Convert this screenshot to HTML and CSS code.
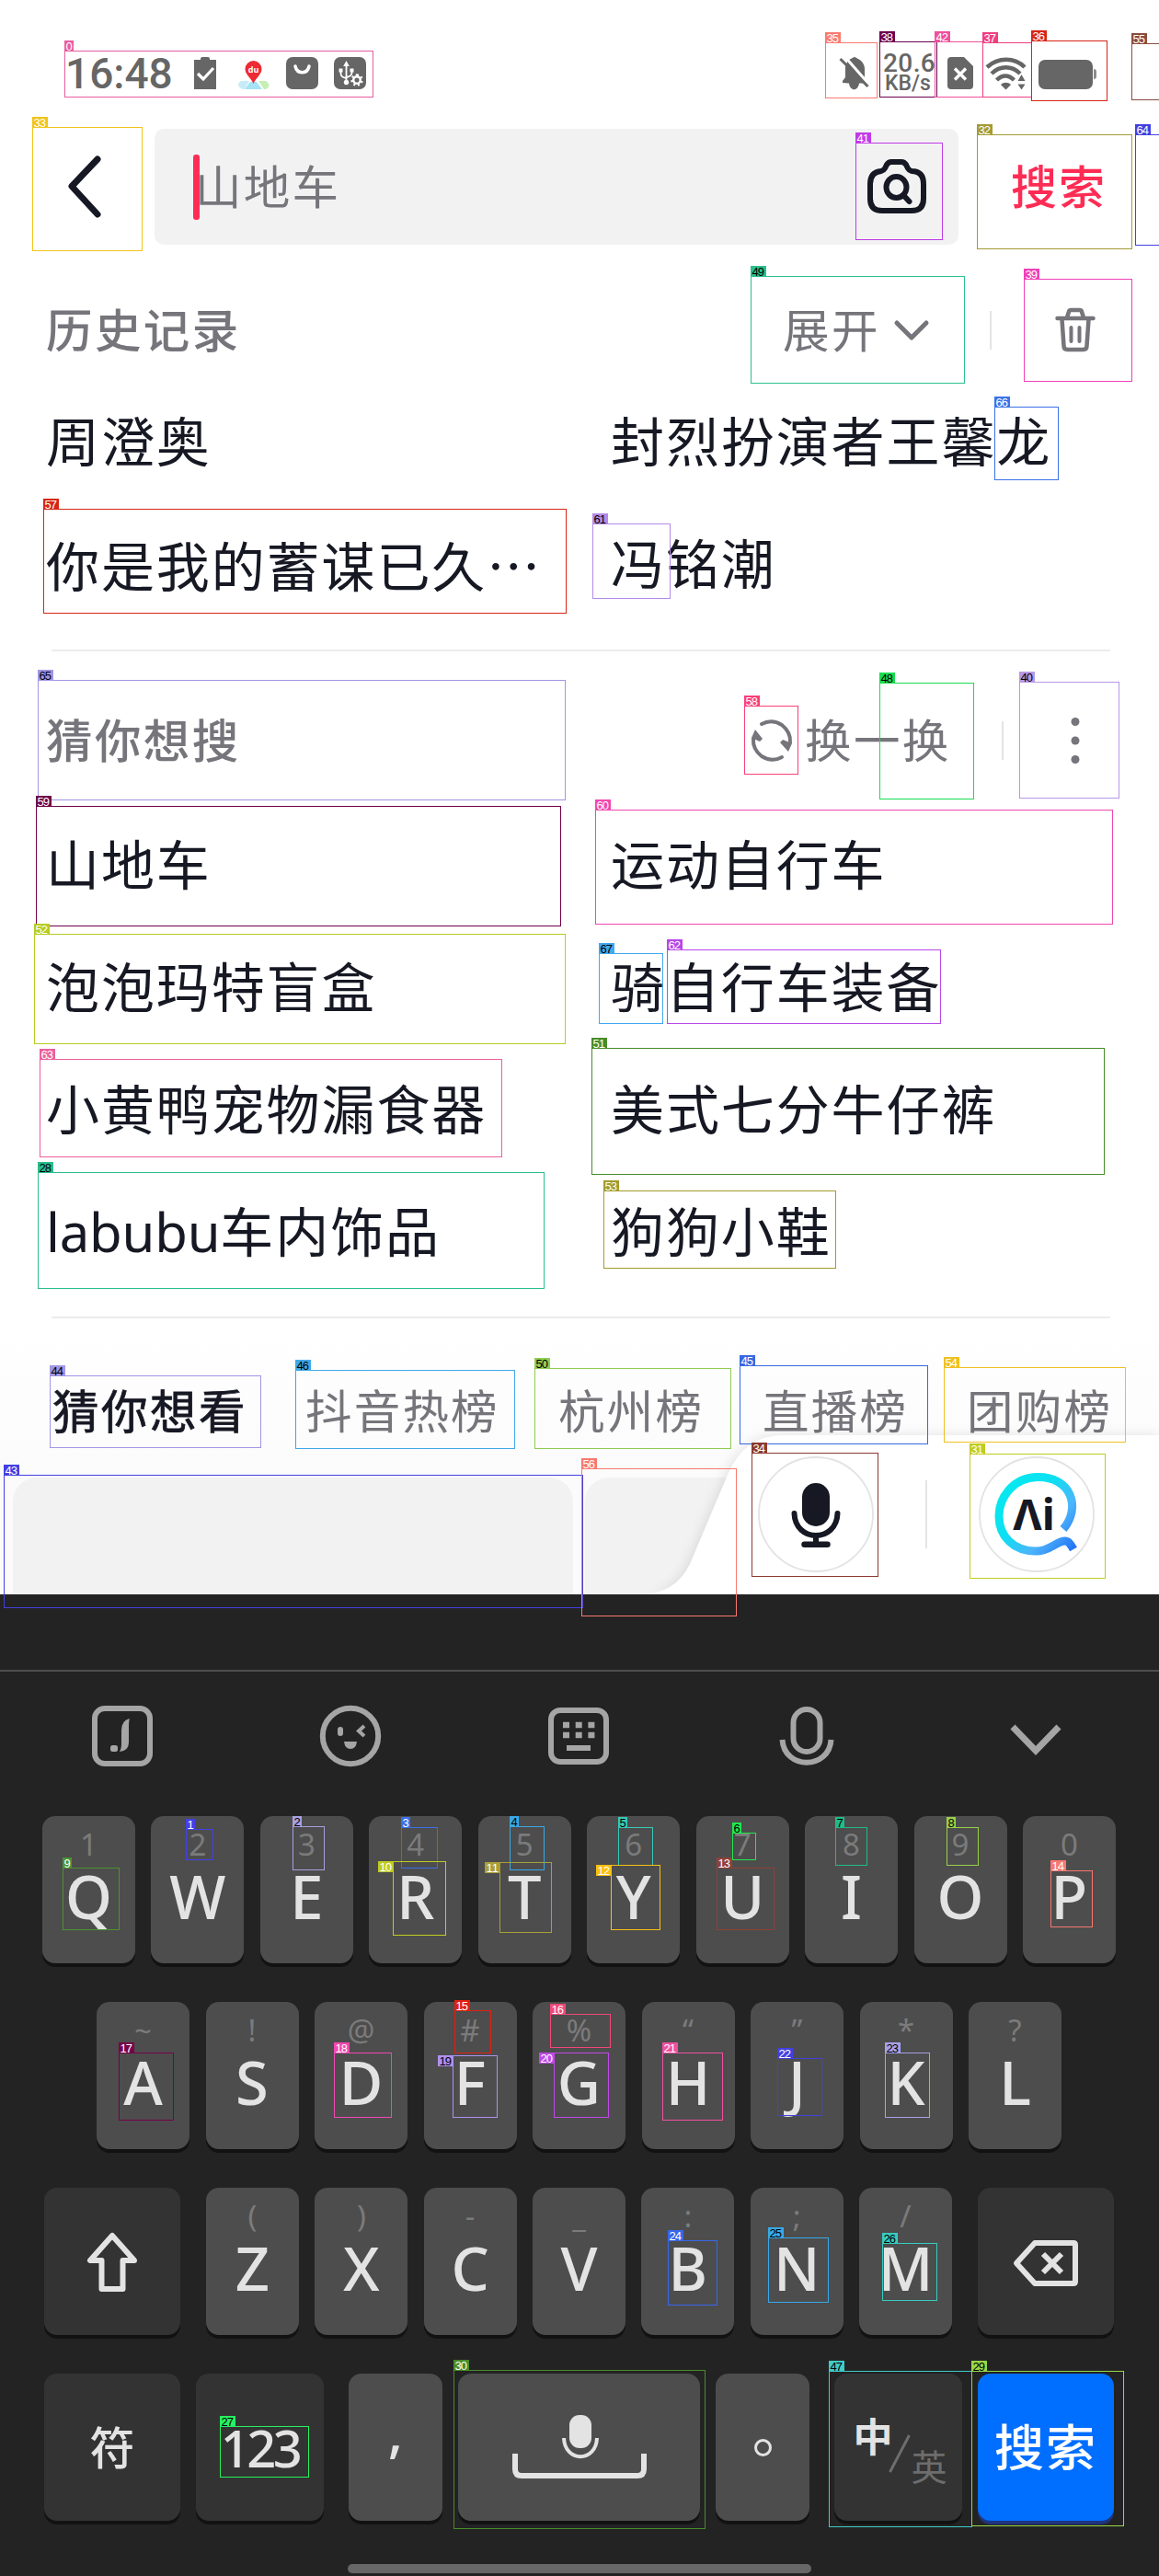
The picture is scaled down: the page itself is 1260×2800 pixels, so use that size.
FILE: index.html
```html
<!DOCTYPE html>
<html lang="zh-CN">
<head>
<meta charset="utf-8">
<title>搜索</title>
<link rel="stylesheet" href="styles.css">
</head>
<body>
<div class="screen">
  <header class="status">
    <div class="status-left">
      <span class="clock">16:48</span>
      <svg width="26" height="36" viewBox="0 0 26 36"><path fill="#666" d="M1 3h7V2a2 2 0 0 1 2-2h6a2 2 0 0 1 2 2v1h7v32H1z"/><path fill="none" stroke="#fff" stroke-width="3.2" d="M5 18l6 6 11-12"/></svg>
      <svg width="35" height="36" viewBox="0 0 35 36"><path fill="#c7ecf7" d="M4 26h9l-5 9H6c-5-2-7-6-2-9z"/><path fill="#a5e3f5" d="M14 27h7l6 8H8z"/><path fill="#c6efb5" d="M23 26h8c5 3 4 7 0 9h-2z"/><path fill="#ee2a33" d="M17.500 4a9 9 0 0 1 9 9c0 6-6 9-9 16-3-7-9-10-9-16a9 9 0 0 1 9-9z"/><text class="pin-text" x="17.500" y="17">du</text></svg>
      <svg width="35" height="36" viewBox="0 0 35 36"><rect width="35" height="35" rx="7" fill="#666"/><path fill="none" stroke="#fff" stroke-width="3.500" stroke-linecap="round" d="M10 10c2 9 13 9 15 0"/></svg>
      <svg width="35" height="36" viewBox="0 0 35 36"><rect width="35" height="35" rx="7" fill="#666"/><g fill="none" stroke="#fff" stroke-width="1.800"><path d="M13.500 8v19M7.500 14v4q0 4 6 5M19.500 14v3q0 4-6 5"/><circle cx="25" cy="25" r="3.800" stroke-width="2.500"/><path stroke-width="2.500" stroke-dasharray="2 2.700" d="M25 19.500a5.500 5.500 0 1 1-.01 0"/></g><path fill="#fff" d="M13.500 4l3.300 6h-6.600zM5.500 12.500h4v4h-4zM17.500 12.500h4v4h-4z"/><circle cx="13.500" cy="27.500" r="2.700" fill="#fff"/></svg>
    </div>
    <div class="status-right">
      <svg width="34" height="36" viewBox="0 0 34 36"><path fill="#666" d="M4 28V26l3-4V11C8 5 12 2 14 1.500c2-2 4-2 6 0 5 2 8 7 8 11v10l3 4v2H22c-1 9-10 9-11 0z"/><path stroke="#fff" stroke-width="3" d="M6-1l28 32"/><path stroke="#666" stroke-width="3" d="M1.500 2l30 30"/></svg>
      <div class="net"><span class="net-value">20.6</span><span class="net-unit">KB/s</span></div>
      <svg width="28" height="36" viewBox="0 0 28 36"><path fill="#666" d="M4 0h14l10 10v21a4 4 0 0 1-4 4H4a4 4 0 0 1-4-4V4a4 4 0 0 1 4-4z"/><path stroke="#fff" stroke-width="3.400" d="M8 12.500l12 12M20 12.500l-12 12"/></svg>
      <svg width="44" height="36" viewBox="0 0 44 36"><g fill="none" stroke="#666" stroke-width="4.500"><path d="M1 11C13 0 31 0 42 11"/><path d="M6 18c9-9 22-9 31 0"/><path d="M11.500 25c6-6 13-6 19 0"/></g><path fill="#666" d="M16 30c3-3 8-3 11 0l-5.500 5.500zM38.500 19l4 7h-8zM38.500 35.500l4-6h-8z"/></svg>
      <svg width="64" height="36" viewBox="0 0 64 36"><rect y="3" width="59" height="32" rx="7" fill="#666"/><path fill="#8a8a8a" d="M60 13q3 0 3 3v5q0 3-3 3z"/></svg>
    </div>
  </header>

  <div class="search-row">
    <svg class="back" width="38" height="70" viewBox="0 0 38 70"><path fill="none" stroke="#161823" stroke-width="7" stroke-linecap="round" stroke-linejoin="round" d="M33 5L5 34.500 33 65"/></svg>
    <div class="search-box">
      <i class="caret"></i><span class="placeholder">山地车</span>
      <svg class="camera" width="64" height="60" viewBox="0 0 64 60"><g fill="none" stroke="#161823" stroke-width="6" stroke-linejoin="round" stroke-linecap="round"><path d="M15 13q3-1 4-3l2-4q2-3 5-3h11q3 0 5 3l2 4q1 2 4 3 13 0 13 14v16q0 13-13 13H16Q3 56 3 43V27q0-13 12-14z"/><ellipse cx="31.500" cy="30.500" rx="11" ry="11.500"/><path d="M39 39l6.500 7"/></g></svg>
    </div>
    <span class="submit">搜索</span>
  </div>

  <section class="history">
    <div class="head">
      <h2>历史记录</h2>
      <span class="expand">展开</span>
      <svg class="chev" width="40" height="24" viewBox="0 0 40 24"><path fill="none" stroke="#75757b" stroke-width="5" stroke-linecap="round" stroke-linejoin="round" d="M4 4l16 16L36 4"/></svg>
      <i class="bar"></i>
      <svg class="trash" width="44" height="48" viewBox="0 0 44 48"><g fill="none" stroke="#75757b" stroke-width="4.500" stroke-linecap="round" stroke-linejoin="round"><path d="M2.500 11h39M13 10l2-6q0-2 3-2h8q3 0 3 2l2 6M7.500 12l2 29q0 4 4 4h17q4 0 4-4l2-29"/><path stroke-width="4" d="M17.500 21v15M26.500 21v15"/></g></svg>
    </div>
    <div class="grid">
      <span>周澄奥</span><span>封烈扮演者王馨龙</span>
      <span>你是我的蓄谋已久<b class="dots">…</b></span><span>冯铭潮</span>
    </div>
  </section>

  <hr class="rule rule-a">

  <section class="guess">
    <div class="head">
      <h2>猜你想搜</h2>
      <svg class="refresh" width="46" height="46" viewBox="0 0 46 46"><g fill="none" stroke="#75757b" stroke-width="4" stroke-linecap="round"><path d="M12 5Q23-1 34 6q10 8 9 19"/><path d="M34 41q-11 6-22-1Q2 32 3 21"/></g><path fill="#75757b" d="M1 20L5 11l8 10-3 3zM45 26l-4 9-9-10 3-3z"/></svg>
      <span class="swap">换一换</span>
      <i class="bar"></i>
      <svg class="more" width="10" height="50" viewBox="0 0 10 50"><g fill="#75757b"><circle cx="5" cy="4.500" r="4.500"/><circle cx="5" cy="25" r="4.500"/><circle cx="5" cy="45.500" r="4.500"/></g></svg>
    </div>
    <div class="grid">
      <span>山地车</span><span>运动自行车</span>
      <span>泡泡玛特盲盒</span><span>骑自行车装备</span>
      <span>小黄鸭宠物漏食器</span><span>美式七分牛仔裤</span>
      <span><b class="latin">labubu</b>车内饰品</span><span>狗狗小鞋</span>
    </div>
  </section>

  <hr class="rule rule-b">

  <section class="trending">
    <nav class="tabs"><span class="active">猜你想看</span><span>抖音热榜</span><span>杭州榜</span><span>直播榜</span><span>团购榜</span></nav>
    <div class="cards"><div class="card"></div><div class="card"></div></div>
    <svg class="sheet" width="640" height="213" viewBox="0 0 640 213">
      <defs>
        <filter id="soft" x="-10%" y="-20%" width="120%" height="140%"><feGaussianBlur stdDeviation="7"/></filter>
        <linearGradient id="ring" gradientUnits="userSpaceOnUse" x1="470" y1="95" x2="552" y2="165"><stop offset="0" stop-color="#06e9ee"/><stop offset=".35" stop-color="#0edff2"/><stop offset=".65" stop-color="#4cb4fb"/><stop offset="1" stop-color="#1e6cf5"/></linearGradient>
      </defs>
      <path fill="#000" opacity=".1" filter="url(#soft)" d="M82 213q32-2 46-33l41-97q18-43 62-43h409v173z"/>
      <path fill="#fff" d="M76 213q38 0 54-33l41-97q18-43 60-43h409v173z"/>
      <g fill="#fff" stroke="#e3e3e5" stroke-width="1.800"><circle cx="267" cy="126" r="62"/><circle cx="507" cy="126" r="62"/><path d="M387 89v74"/></g>
      <rect x="252" y="92" width="30" height="47" rx="15" fill="#161823"/>
      <path fill="none" stroke="#161823" stroke-width="6" stroke-linecap="round" d="M243.500 125c1 32 46 32 47 0M267 150v9"/>
      <path fill="none" stroke="#161823" stroke-width="6.500" stroke-linecap="round" d="M254.500 158.800h25"/>
      <path fill="none" stroke="url(#ring)" stroke-width="9" d="M536 142C556 118 544 85 508 85.500 481 86 466 108 466 128c0 22 16 38 40 38 16 0 22-11 32-11 4 0 6 4 9 9"/>
      <text class="ai" x="504" y="143">Λi</text>
    </svg>
  </section>

  <section class="keyboard">
    <div class="toolbar">
      <svg width="68" height="68" viewBox="0 0 68 68"><rect x="4" y="4" width="60" height="60" rx="11" fill="none" stroke="#a5a5a5" stroke-width="6"/><path fill="#a5a5a5" d="M42 15q-1 2-1 9v17q0 9-10 10 2-3 2-9V28q0-11 9-13z"/><rect x="21" y="44" width="8" height="7" rx="2.500" fill="#a5a5a5"/></svg>
      <svg width="68" height="68" viewBox="0 0 68 68"><circle cx="34" cy="34" r="30.200" fill="none" stroke="#a5a5a5" stroke-width="6"/><rect x="20" y="24" width="6" height="10" rx="3" fill="#a5a5a5"/><path fill="none" stroke="#a5a5a5" stroke-width="4" d="M49 23l-6 5.500 6 5.500"/><path fill="#a5a5a5" d="M27 40h14q-1 8-7 8t-7-8z"/></svg>
      <svg width="68" height="68" viewBox="0 0 68 68"><rect x="4" y="6" width="60" height="56" rx="10" fill="none" stroke="#a5a5a5" stroke-width="6"/><path stroke="#a5a5a5" stroke-width="6.500" stroke-dasharray="7 6.700" d="M17 22h35M17 33h35"/><path stroke="#a5a5a5" stroke-width="6" d="M21 47h26"/></svg>
      <svg width="68" height="68" viewBox="0 0 68 68"><g fill="none" stroke="#a5a5a5" stroke-width="6"><rect x="19.500" y="5" width="29" height="46" rx="14.500"/><path d="M7.500 38c2 33 51 33 53 0"/></g></svg>
      <svg width="68" height="68" viewBox="0 0 68 68"><path fill="none" stroke="#a5a5a5" stroke-width="7" d="M10 24l25 26 25-26"/></svg>
    </div>
    <div class="keys row-1">
      <div class="key"><i>1</i><b>Q</b></div><div class="key"><i>2</i><b>W</b></div><div class="key"><i>3</i><b>E</b></div><div class="key"><i>4</i><b>R</b></div><div class="key"><i>5</i><b>T</b></div><div class="key"><i>6</i><b>Y</b></div><div class="key"><i>7</i><b>U</b></div><div class="key"><i>8</i><b>I</b></div><div class="key"><i>9</i><b>O</b></div><div class="key"><i>0</i><b>P</b></div>
    </div>
    <div class="keys row-2">
      <div class="key"><i>~</i><b>A</b></div><div class="key"><i>!</i><b>S</b></div><div class="key"><i>@</i><b>D</b></div><div class="key"><i>#</i><b>F</b></div><div class="key"><i>%</i><b>G</b></div><div class="key"><i>“</i><b>H</b></div><div class="key"><i>”</i><b>J</b></div><div class="key"><i>*</i><b>K</b></div><div class="key"><i>?</i><b>L</b></div>
    </div>
    <div class="keys row-3">
      <div class="key dark wide"><svg width="56" height="68" viewBox="0 0 56 68"><path fill="none" stroke="#e3e3e3" stroke-width="6" stroke-linejoin="round" d="M28 4L4 31h12.500v31h23V31H52z"/></svg></div>
      <div class="letters"><div class="key"><i>(</i><b>Z</b></div><div class="key"><i>)</i><b>X</b></div><div class="key"><i>-</i><b>C</b></div><div class="key"><i>_</i><b>V</b></div><div class="key"><i>:</i><b>B</b></div><div class="key"><i>;</i><b>N</b></div><div class="key"><i>/</i><b>M</b></div></div>
      <div class="key dark wide"><svg width="72" height="52" viewBox="0 0 72 52"><g fill="none" stroke="#e3e3e3" stroke-width="6" stroke-linejoin="round"><path d="M24 4h42q2 0 2 2v40q0 2-2 2H24L4 26z"/><path d="M33 16l20 20M53 16L33 36"/></g></svg></div>
    </div>
    <div class="keys row-4">
      <div class="key dark key-sym"><span class="sym">符</span></div>
      <div class="key dark key-mode"><span class="num">123</span></div>
      <div class="key set-off"><span class="comma">,</span></div>
      <div class="key key-space"><svg class="space" width="146" height="74" viewBox="0 0 146 74"><path fill="none" stroke="#e3e3e3" stroke-width="6" d="M3 44v17q0 7 7 7h126q7 0 7-7V44"/><rect x="62" y="2" width="24" height="36" rx="11" fill="#e3e3e3"/><path fill="none" stroke="#e3e3e3" stroke-width="4" d="M56 27c1 27 35 27 36 0"/></svg></div>
      <div class="key"><i class="stop"></i></div>
      <div class="key dark key-mode lang set-off"><span class="zh">中</span><svg width="24" height="42" viewBox="0 0 24 42"><path stroke="#6d6d6d" stroke-width="3" d="M1.500 41L22.500 1"/></svg><span class="en">英</span></div>
      <div class="key go"><span>搜索</span></div>
    </div>
    <i class="home"></i>
  </section>
  <svg class="marks" id="marks" width="1260" height="2800" viewBox="0 0 1260 2800"></svg>
</div>
<script src="script.js"></script>
</body>
</html>
```
FILE: styles.css
```css
* { box-sizing: border-box; }
body { margin: 0; background: #fff; font-family: "Noto Sans", "Noto Sans CJK SC", sans-serif; color: #161823; }
svg { display: block; flex: none; overflow: visible; }
i, b { font-style: normal; font-weight: inherit; }
.screen { position: relative; width: 1260px; height: 2800px; overflow: hidden; }

.status { display: flex; justify-content: space-between; height: 140px; padding: 19px 67px 0 71px; color: #666; }
.status-left, .status-right { display: grid; align-items: center; }
.status-left { grid-template-columns: 139px 48px 53px 52px 35px; }
.status-right { grid-template-columns: 48px 70px 42px 57px 64px; }
.clock { font: 500 46px/60px Roboto, sans-serif; }
.pin-text { font: 700 9px "Open Sans", sans-serif; fill: #fff; text-anchor: middle; }
.net { display: flex; flex-direction: column; font-family: Roboto, sans-serif; font-weight: 500; white-space: nowrap; }
.net-value { font-size: 28px; line-height: 23px; letter-spacing: .4px; }
.net-unit { font-size: 23px; line-height: 22px; padding-left: 2px; }

.search-row { display: flex; align-items: center; height: 126px; padding-left: 73px; }
.search-box { display: flex; align-items: center; width: 874px; height: 126px; margin-left: 57px; padding: 0 35px 0 42px; border-radius: 10px; background: #f2f2f3; }
.caret { width: 7px; height: 71px; border-radius: 3px; background: #fe2c55; z-index: 1; }
.placeholder { flex: 1; margin-left: -5px; font-size: 50.500px; letter-spacing: 2.200px; line-height: 70px; color: #75757b; }
.submit { margin-left: 57px; font-size: 50px; letter-spacing: 2px; line-height: 70px; color: #fe2c55; font-weight: 500; }

.head { display: flex; align-items: center; padding-left: 50px; color: #75757b; font-size: 50.500px; letter-spacing: 2.400px; line-height: 72px; }
.head h2 { margin: 0; font-size: inherit; font-weight: 500; }
.history .head { height: 110px; margin-top: 38px; }
.history h2 { width: 801px; }
.expand { width: 120px; }
.bar { width: 2px; height: 42px; background: #e3e3e5; }
.chev { margin-right: 65px; }
.trash { margin-left: 69px; }
.guess .head { height: 138px; margin-top: 28px; }
.guess h2 { width: 766px; }
.swap { width: 214px; margin-left: 13px; }
.more { margin-left: 73px; }
.grid { display: grid; grid-template-columns: 614px 1fr; grid-auto-rows: 133px; padding-left: 50px; font-size: 58px; letter-spacing: 1.900px; line-height: 132px; white-space: nowrap; }
.dots { font-family: "Noto Sans CJK SC", sans-serif; }
.latin { letter-spacing: -.2px; }
.rule { height: 2px; margin: 0 53px 0 56px; border: 0; background: #ececee; }
.rule-a { margin-top: 26px; }
.rule-b { margin-top: 25px; }

.trending { position: relative; height: 300px; padding-top: 28px; background: linear-gradient(#fff, #fbfbfb 60%); }
.tabs { display: grid; grid-template-columns: 275px 275px 222px 222px 1fr; height: 145px; padding-left: 57px; font-size: 50.500px; letter-spacing: 2.200px; line-height: 145px; color: #75757b; white-space: nowrap; }
.tabs .active { color: #161823; letter-spacing: 2.500px; -webkit-text-stroke: .8px #161823; }
.cards { display: flex; gap: 13px; padding-left: 14px; }
.card { width: 609px; height: 127px; flex: none; border-radius: 26px 26px 0 0; background: #f2f2f2; }
.sheet { position: absolute; right: 0; bottom: 0; overflow: hidden; }
.ai { font: 700 47px "Noto Sans", sans-serif; fill: #161823; text-anchor: middle; }

.keyboard { position: relative; height: 1067px; padding-top: 82px; background: #232323; color: #e3e3e3; }
.toolbar { display: flex; gap: 180px; align-items: center; height: 142px; padding-left: 99px; border-top: 2px solid #4e4e4e; }
.keys { display: flex; justify-content: space-between; height: 160px; margin-bottom: 42px; }
.row-1 { margin: 17px 47px 42px 46px; }
.row-2 { margin-left: 105px; margin-right: 106px; }
.row-3 { margin-left: 48px; margin-right: 49px; }
.letters { display: flex; justify-content: space-between; width: 811px; }
.key { display: flex; flex: none; flex-direction: column; align-items: center; width: 101px; height: 160px; padding-top: 7px; border-radius: 14px; background: #4d4d4d; box-shadow: 0 4px 0 #121212; }
.key > i { height: 48px; font-size: 33px; line-height: 48px; color: #7b7b7b; }
.key > b { font-size: 65px; line-height: 64px; font-weight: 500; }
.dark { background: #333; }
.wide { width: 148px; justify-content: center; padding: 4px 0 0; }
.row-4 { justify-content: flex-start; gap: 17px; margin: 0 49px 47px 48px; }
.row-4 .key { width: 102px; justify-content: center; padding: 0; }
.row-4 .key-sym, .row-4 .go { width: 148px; }
.row-4 .key-mode { width: 139px; }
.row-4 .key-space { width: 263px; }
.row-4 .set-off { margin-left: 10px; }
.sym { font-size: 49px; font-weight: 500; line-height: 70px; }
.num { font-size: 56px; font-weight: 500; line-height: 70px; letter-spacing: -3.500px; }
.comma { font: 500 60px/70px "Noto Sans", sans-serif; margin-bottom: 36px; }
.row-4 .key > .stop { width: 19px; height: 19px; border: 3.500px solid #e3e3e3; border-radius: 50%; }
.row-4 .lang { flex-direction: row; gap: 0; }
.zh { font-size: 43px; font-weight: 700; line-height: 50px; margin: 0 0 22px 4px; }
.lang svg { margin: 14px 0 0 -4px; }
.en { font-size: 39px; line-height: 50px; color: #6d6d6d; margin-top: 42px; }
.row-4 .go { background: #006eff; box-shadow: 0 4px 0 #1f347e; color: #fff; font-size: 54px; font-weight: 500; line-height: 70px; letter-spacing: 2px; }
.home { display: block; width: 504px; height: 10px; margin-left: 378px; border-radius: 5px; background: #676767; }

.marks { position: absolute; left: 0; top: 0; }
.marks text { font: 13px/1 "Liberation Sans", sans-serif; }
```
FILE: script.js
```js
// Numbered region marks: id, left, top, right, bottom, colour, number colour (d = black), tag side (l = left).
const marks = [
  [0,70,55,405,105,'#e85d9e'],[33,35,138,154,272,'#f0c419'],[35,897,46,953,106,'#fa7a70'],[38,956,45,1018,105,'#6b0050'],
  [42,1016,45,1068,105,'#f04f9c'],[37,1068,46,1121,105,'#ee3f80'],[36,1121,44,1203,109,'#d62516'],[55,1230,47,1300,108,'#8a4b3f'],
  [41,930,155,1024,260,'#c03ae8'],[32,1062,146,1230,270,'#a39b32'],[64,1234,146,1300,266,'#4340e0'],[57,47,553,615,666,'#d62516'],
  [49,816,300,1048,416,'#2bc08a','d'],[39,1113,303,1230,414,'#f040b8'],[66,1081,442,1150,521,'#3a72e8'],[61,644,569,728,650,'#b48ae8','d'],
  [65,41,739,614,869,'#a096e6','d'],[59,39,876,609,1006,'#70004a'],[52,37,1015,614,1134,'#b8cc20'],[63,43,1151,545,1257,'#ea5f9e'],
  [28,41,1274,591,1400,'#28bc8e','d'],[58,809,767,867,841,'#f84078'],[48,956,742,1058,868,'#18dc50','d'],[40,1108,741,1216,867,'#b898e6','d'],
  [60,647,880,1209,1004,'#f048b0'],[67,651,1036,720,1112,'#40a8f0','d'],[62,725,1032,1022,1112,'#b848e8'],[51,643,1139,1200,1276,'#488c28'],
  [53,656,1294,908,1378,'#a09c2c'],[44,54,1495,283,1573,'#a096e6','d'],[46,321,1489,559,1574,'#40a8e8','d'],[50,581,1487,794,1574,'#90cc50','d'],
  [43,4,1603,633,1747,'#4340e0'],[45,804,1484,1008,1569,'#3868e0'],[54,1026,1486,1223,1567,'#f0c020'],[56,632,1596,800,1756,'#f87870'],
  [34,817,1579,954,1713,'#8a3a30'],[31,1054,1580,1201,1715,'#c0cc20'],[9,68,2030,129,2097,'#4a9430'],[1,202,1988,231,2021,'#4340e8'],
  [2,318,1985,352,2032,'#a8a0e0','d'],[3,436,1986,475,2030,'#3870e8'],[4,554,1985,591,2032,'#38a8e8','d'],[10,427,2023,484,2103,'#c0cc20','','l'],
  [11,543,2024,599,2100,'#a8a038','','l'],[17,129,2231,188,2304,'#78004a'],[18,363,2231,425,2301,'#f048b0'],[15,494,2185,533,2231,'#e02010'],
  [19,492,2234,540,2301,'#b090f0','d','l'],[16,598,2189,663,2225,'#f04878'],[20,602,2231,661,2301,'#c048e8','','l'],[5,672,1986,709,2027,'#38c8b8','d'],
  [12,664,2027,717,2097,'#f8c010','','l'],[6,796,1992,821,2021,'#20e850','d'],[13,779,2030,841,2097,'#904038'],[7,908,1986,942,2027,'#20bc88','d'],
  [8,1029,1986,1063,2027,'#98d048','d'],[14,1142,2033,1187,2094,'#f87870'],[21,720,2231,785,2304,'#f050a0'],[22,845,2237,893,2299,'#4340e0'],
  [23,962,2231,1010,2301,'#a8a0e8','d'],[30,493,2576,766,2748,'#488c28'],[27,239,2637,335,2692,'#28f060','d'],[24,726,2435,779,2505,'#3868e8'],
  [25,835,2432,900,2502,'#38a8e8','d'],[26,959,2438,1018,2500,'#38ccc0','d'],[47,901,2577,1056,2746,'#40ccc8','d'],[29,1056,2577,1221,2745,'#98d848','d']
];
const outside = { 10: 427, 11: 543, 19: 492, 20: 602, 12: 664 };
document.getElementById('marks').innerHTML = marks.map(([id, x1, y1, x2, y2, colour, ink]) => {
  const w = id > 9 ? 17 : 10;
  const left = id in outside;
  const tx = left ? outside[id] - w + 1 : x1;
  const ty = left ? y1 : y1 - 11;
  return `<rect x="${x1 + .5}" y="${y1 + .5}" width="${x2 - x1}" height="${y2 - y1}" fill="none" stroke="${colour}"/>` +
    `<rect x="${tx}" y="${ty}" width="${w}" height="12" fill="${colour}"/>` +
    `<text x="${tx + 1.5}" y="${ty + 10.500}" textLength="${id > 9 ? 13.500 : 7}" fill="${ink === 'd' ? '#000' : '#fff'}">${id}</text>`;
}).join('');
```
